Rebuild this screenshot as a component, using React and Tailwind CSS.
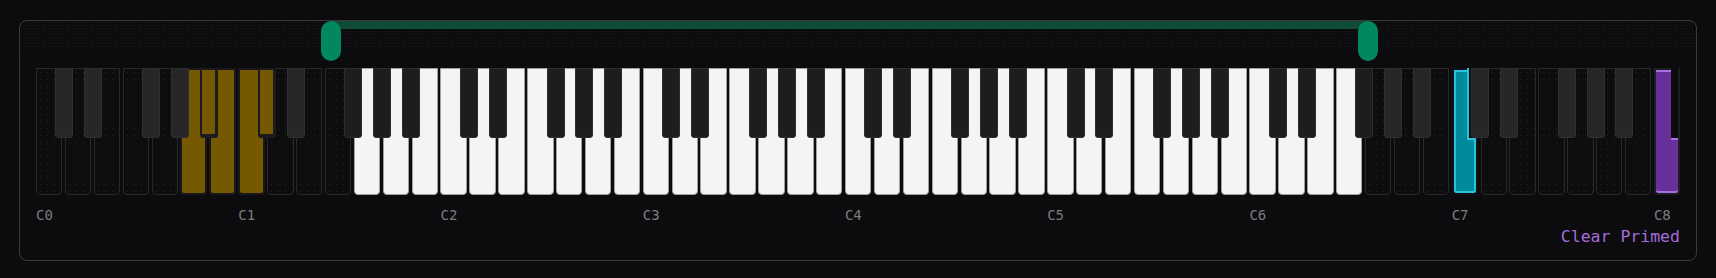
import React from 'react';

const NAMES = ['C', 'D', 'E', 'F', 'G', 'A', 'B'];
const OFFSETS = [0, 2, 4, 5, 7, 9, 11];
const LAST = 96; // C8
const TOTAL = 97;
const RANGE_LO = 18; // F#1
const RANGE_HI = 78; // F#6
const HELD = [9, 10, 11, 12, 13];
const PRIMED_LO = 84; // C7
const PRIMED_HI = 96; // C8

const mono = "font-['DejaVu_Sans_Mono','Liberation_Mono',monospace]";

const whites = [];
for (let oct = 0; oct <= 8; oct++) {
  NAMES.forEach((name, i) => {
    const note = oct * 12 + OFFSETS[i];
    if (note > LAST) return;
    whites.push({ name, oct, note, sharp: name !== 'E' && name !== 'B' && note < LAST });
  });
}

function stateOf(note) {
  if (note === PRIMED_LO) return 'lo';
  if (note === PRIMED_HI) return 'hi';
  if (HELD.includes(note)) return 'held';
  if (note >= RANGE_LO && note <= RANGE_HI) return 'range';
  return 'off';
}

const whiteFace = {
  off: 'border border-[#29292c] bg-[#0d0c0f] bg-[radial-gradient(circle,#242427_0.6px,transparent_0.8px)] bg-size-[7px_7px]',
  range: 'border border-[#a1a1a1] bg-[#f5f4f2]',
  held: 'border-2 border-[#19191b] bg-[#765800]',
  lo: 'border-2 border-[#121214] bg-[#008b9d] shadow-[inset_0_0_0_2px_#26c3db]',
  hi: 'border-2 border-[#1f1f21] bg-[#67309b] shadow-[inset_0_2px_0_#a371e3,inset_0_-2px_0_#a371e3]',
};

const blackFace = {
  off: 'border border-[#2f2f31] bg-[#27272a]',
  range: 'border border-[#2e2e30] bg-[#1d1d1f]',
  held: 'border-2 border-r-[3px] border-b-4 border-[#1c1c1e] bg-[#765800]',
};

function WhiteKey({ k }) {
  const s = stateOf(k.note);
  const bs = k.sharp ? stateOf(k.note + 1) : null;
  return (
    <div className="relative h-[127px] min-w-0 flex-1">
      <div className={`absolute inset-0 rounded-b-[4px] ${whiteFace[s]}`} />
      {s === 'lo' && (
        <div className="absolute top-0 right-[2px] h-[72px] w-[9px] border-b-2 border-l-2 border-[#26c3db] bg-[#0c0b0e]" />
      )}
      {s === 'hi' && (
        <div className="absolute top-0 right-[2px] h-[72px] w-[7px] border-b-2 border-[#a371e3] bg-[#0c0b0e]" />
      )}
      {k.sharp && (
        <div className={`absolute top-0 right-[-11px] z-10 h-[70px] w-[18px] rounded-b-[3px] ${blackFace[bs]}`} />
      )}
    </div>
  );
}

export default function App() {
  const lo = (RANGE_LO / TOTAL) * 100;
  const hi = (RANGE_HI / TOTAL) * 100;

  return (
    <div className={`min-h-screen bg-[#0c0b0e] px-[19px] pt-5 ${mono}`}>
      <div className="overflow-hidden rounded-lg border border-[#3a3a3d] pb-[11px]">
        {/* range slider */}
        <div className="relative h-[31px] bg-[radial-gradient(circle,#19191c_0.7px,transparent_0.9px)] bg-size-[3px_3px]">
          <div className="absolute top-0 h-2 bg-[#0e4c36]" style={{ left: `${lo}%`, right: `${100 - hi}%` }} />
          <div
            className="absolute top-0 z-20 h-10 w-5 -translate-x-1/2 rounded-full bg-[#02885e]"
            style={{ left: `${lo}%` }}
          />
          <div
            className="absolute top-0 z-20 h-10 w-5 -translate-x-1/2 rounded-full bg-[#02885e]"
            style={{ left: `${hi}%` }}
          />
        </div>

        {/* keys */}
        <div className="mt-4 flex gap-[2.5px] px-4">
          {whites.map((k) => (
            <WhiteKey key={k.note} k={k} />
          ))}
        </div>

        {/* octave labels */}
        <div className="mt-[10px] flex gap-[2.5px] px-4">
          {whites.map((k) => (
            <div key={k.note} className="min-w-0 flex-1 whitespace-nowrap text-[14px] leading-5 text-[#7d7d80]">
              {k.name === 'C' ? `C${k.oct}` : ''}
            </div>
          ))}
        </div>

        <div className="flex justify-end px-4">
          <button type="button" className="text-[16.5px] leading-6 text-[#a56bda]">
            Clear Primed
          </button>
        </div>
      </div>
    </div>
  );
}
